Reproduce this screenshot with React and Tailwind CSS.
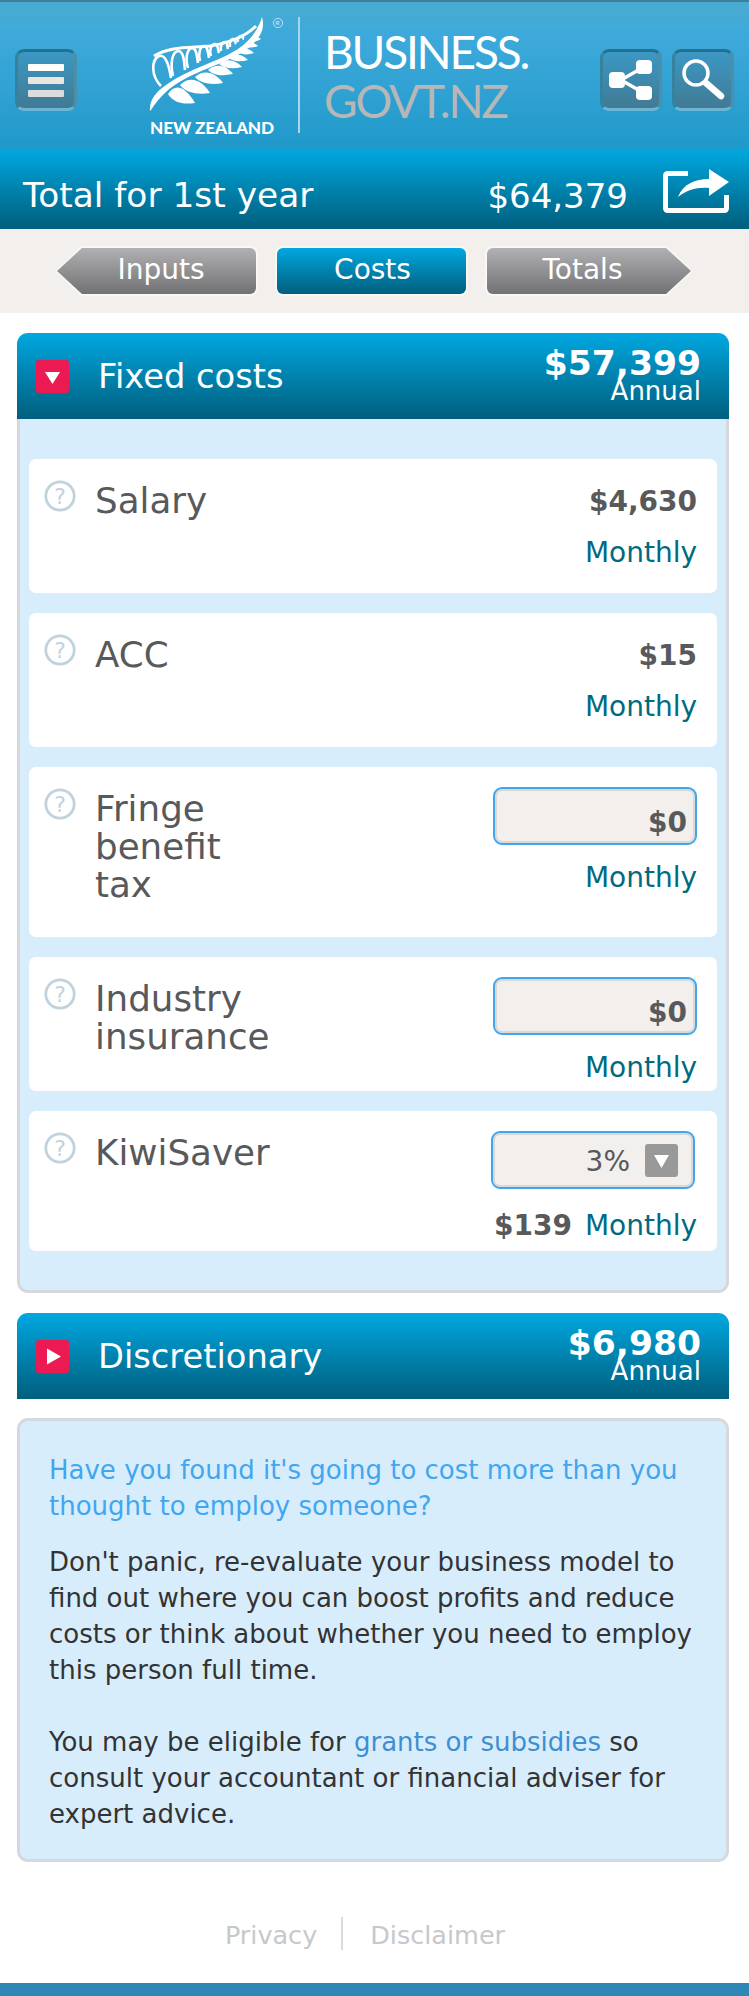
import React from 'react';

const gradBar = 'bg-gradient-to-b from-[#00a8e1] to-[#005f7e]';

function ToolButton({ children }) {
  return (
    <div className="w-[62px] h-[62px] rounded-[9px] border-[3px] border-t-[#25708f] border-l-[#35829f] border-r-[#4d8fa9] border-b-[#6db5d4] bg-gradient-to-b from-[#3a98c4] to-[#417a94] flex items-center justify-center">
      {children}
    </div>
  );
}

function Fern() {
  const arches = [
    'M21 76 C11 66 11 50 19 46 C26 44 29 56 31 68',
    'M33 66 C30 54 32 42 38 41 C44 41 44 52 45 60',
    'M48 58 C45 48 47 39 52 38 C57 38 57 48 58 53',
    'M60 51 C58 44 60 36 64 36 C68 36 68 44 69 48',
    'M71 46 C69 40 71 34 75 34 C78 34 78 40 79 43',
    'M81 41 C80 36 82 32 85 32 C88 32 87 37 88 39',
    'M90 37 C89 33 91 29 93 29 C96 29 95 33 96 34',
    'M98 32 C97 29 99 26 101 26 C103 25 103 29 104 29',
  ];
  const leaves = [
    'M28 84 C36 72 46 78 55 93 C42 95 33 92 28 84',
    'M40 75 C50 65 62 70 70 83 C58 85 46 83 40 75',
    'M55 67 C64 59 75 62 83 73 C72 75 61 74 55 67',
    'M68 60 C76 53 86 55 93 64 C83 66 74 66 68 60',
    'M79 54 C86 48 95 49 102 57 C93 59 85 59 79 54',
    'M89 48 C95 43 102 44 108 50 C101 52 94 52 89 48',
    'M98 42 C103 37 109 38 114 43 C108 45 102 45 98 42',
    'M104 36 C108 31 113 32 118 36 C113 38 108 38 104 36',
    'M109 30 C113 25 117 26 121 29 C117 32 112 32 109 30',
  ];
  return (
    <svg viewBox="0 0 170 130" className="w-[170px] h-[130px]">
      <path d="M10 101 C9 90 16 82 26 75 C50 58 78 52 98 39 C110 31 118 20 122 7 C124 14 123 20 120 25 C112 39 96 47 76 55 C52 65 28 73 11 100 Z" fill="#fff" />
      <path d="M14 46 C30 36 50 38 70 36 C88 33 104 28 116 16" fill="none" stroke="#fff" strokeWidth="3" />
      {arches.map((d) => (
        <path key={d} d={d} fill="none" stroke="#fff" strokeWidth="2.6" />
      ))}
      {leaves.map((d) => (
        <path key={d} d={d} fill="#fff" />
      ))}
      <circle cx="138" cy="13" r="4.6" fill="none" stroke="#fff" strokeOpacity="0.7" strokeWidth="0.9" />
      <text x="135.6" y="15.4" fontSize="6.5" fill="#fff" fillOpacity="0.8" fontFamily="Lato, sans-serif">R</text>
    </svg>
  );
}

function Header() {
  return (
    <header className="relative h-[149px] border-t-2 border-[#3e7f98] bg-gradient-to-b from-[#4aabd0] via-[#3eaadb] via-[20%] to-[#1e99ca]">
      <div className="flex h-full items-start pt-[47px] pl-[15px] pr-[15px]">
        <ToolButton>
          <div className="flex flex-col gap-[6px]">
            <div className="w-[36px] h-[7px] rounded-[1px] bg-white" />
            <div className="w-[36px] h-[7px] rounded-[1px] bg-[#e9e6e2]" />
            <div className="w-[36px] h-[7px] rounded-[1px] bg-[#dcdcdc]" />
          </div>
        </ToolButton>
        <div className="absolute left-[140px] top-[8px]">
          <Fern />
          <div className="absolute left-[10px] top-[108px] text-white text-[17.2px] leading-[20px] font-black tracking-[-0.1px] whitespace-nowrap font-['Lato',sans-serif]">
            NEW ZEALAND
          </div>
        </div>
        <div className="absolute left-[298px] top-[15px] w-[2px] h-[116px] bg-[#a8d7ec]" />
        <div className="absolute left-[324px] top-[25px] font-['Lato',sans-serif] text-[46px] leading-[49px] tracking-[-2.2px]">
          <div className="text-white">BUSINESS.</div>
          <div className="text-[#b7b7b7]">GOVT.NZ</div>
        </div>
        <div className="ml-auto flex gap-[10px]">
          <ToolButton>
            <svg viewBox="0 0 44 44" className="w-[44px] h-[44px]">
              <path d="M12 22 L33 10 M12 22 L33 34" stroke="#fff" strokeWidth="3.5" />
              <rect x="0" y="14" width="16" height="16" rx="4" fill="#fff" />
              <rect x="27" y="2" width="16" height="14" rx="4" fill="#fff" />
              <rect x="27" y="28" width="16" height="14" rx="4" fill="#fff" />
            </svg>
          </ToolButton>
          <ToolButton>
            <svg viewBox="0 0 44 44" className="w-[44px] h-[44px]">
              <circle cx="15" cy="15" r="12" fill="none" stroke="#fff" strokeWidth="3.5" />
              <path d="M25 25 L40 38" stroke="#fff" strokeWidth="6.5" strokeLinecap="round" />
            </svg>
          </ToolButton>
        </div>
      </div>
    </header>
  );
}

function TotalBar() {
  return (
    <div className={`${gradBar} h-[80px] flex items-center pl-[23px] pr-[20px] text-white`}>
      <span className="text-[34.4px] pt-[14px]">Total for 1st year</span>
      <span className="ml-auto text-[34px] pt-[14px]">$64,379</span>
      <svg viewBox="0 0 66 44" className="w-[66px] h-[44px] ml-[35px] mt-[4px]">
        <path d="M25 4.5 H5 Q2.5 4.5 2.5 7 V39 Q2.5 41.5 5 41.5 H61 Q63.5 41.5 63.5 39 V26" fill="none" stroke="#fff" strokeWidth="5" />
        <path d="M15 28 C20 15 32 10 46 10 V0 L66 13 L46 27 V19 C34 18 24 21 15 28 Z" fill="#fff" />
      </svg>
    </div>
  );
}

function Nav() {
  return (
    <nav className="h-[84px] bg-[#f2efec] flex pt-[17px] pl-[55px] gap-[17px] text-white text-[28px] leading-[38px]">
      <div className="w-[203px] h-[50px] bg-[#f8f7f6] [clip-path:polygon(26px_0,100%_0,100%_100%,26px_100%,0_50%)] p-[2px] rounded-r-[7px]">
        <div className="h-full pl-[9px] pb-[2px] flex items-center justify-center rounded-r-[6px] bg-gradient-to-b from-[#b1b1b3] to-[#727274] [clip-path:polygon(25px_0,100%_0,100%_100%,25px_100%,0_50%)]">
          Inputs
        </div>
      </div>
      <div className="w-[193px] h-[50px] rounded-[7px] bg-[#f8f7f6] p-[2px]">
        <div className="h-full pl-[2px] pb-[2px] flex items-center justify-center rounded-[6px] bg-gradient-to-b from-[#00a8e1] to-[#005f7e]">
          Costs
        </div>
      </div>
      <div className="w-[208px] h-[50px] bg-[#f8f7f6] [clip-path:polygon(0_0,calc(100%-26px)_0,100%_50%,calc(100%-26px)_100%,0_100%)] p-[2px] rounded-l-[7px]">
        <div className="h-full pr-[13px] pb-[2px] flex items-center justify-center rounded-l-[6px] bg-gradient-to-b from-[#b1b1b3] to-[#727274] [clip-path:polygon(0_0,calc(100%-25px)_0,100%_50%,calc(100%-25px)_100%,0_100%)]">
          Totals
        </div>
      </div>
    </nav>
  );
}

function SectionBar({ title, amount, icon }) {
  return (
    <div className={`${gradBar} relative h-[86px] rounded-t-[11px] flex items-center pl-[19px] text-white`}>
      <div className="w-[33px] h-[33px] rounded-[3px] bg-[#ec1a52] flex items-center justify-center">
        <svg viewBox="0 0 33 33" className="w-[33px] h-[33px]">
          {icon === 'down' ? (
            <path d="M9 12 H24 L16.5 24 Z" fill="#fff" />
          ) : (
            <path d="M11 8.5 L25 16.5 L11 24.5 Z" fill="#fff" />
          )}
        </svg>
      </div>
      <span className="ml-[29px] text-[33.7px] pt-[3px]">{title}</span>
      <div className="absolute right-[28px] top-[9px] text-right">
        <div className="text-[34.5px] leading-[42px] font-bold">{amount}</div>
        <div className="text-[26px] leading-[26px] -mt-[6px]">Annual</div>
      </div>
    </div>
  );
}

function HelpIcon() {
  return (
    <svg viewBox="0 0 32 32" className="w-[32px] h-[32px] shrink-0 mt-[1px]">
      <circle cx="16" cy="16" r="14.2" fill="none" stroke="#c0d3dd" strokeWidth="2.8" />
      <text x="16" y="24" textAnchor="middle" fontSize="22" fill="#c0d3dd" fontFamily="'DejaVu Sans', sans-serif">?</text>
    </svg>
  );
}

function Monthly({ className }) {
  return <span className={`text-[28px] leading-[34px] text-[#006a80] ${className || ''}`}>Monthly</span>;
}

function InputBox({ value }) {
  return (
    <div className="w-[204px] h-[58px] rounded-[9px] border-2 border-[#42a6ef] bg-[#f2efec] shadow-[inset_0_0_0_2px_#dad9d8] flex items-end justify-end pr-[8px] pb-[1px] text-[28px] leading-[38px] font-bold text-[#58595b]">
      {value}
    </div>
  );
}

function Row({ label, children, h }) {
  return (
    <div className={`${h} rounded-[7px] bg-white flex pl-[15px] pr-[20px] pt-[20px]`}>
      <HelpIcon />
      <div className="ml-[19px] pt-[3px] text-[35.7px] leading-[38px] text-[#58595b]">{label}</div>
      <div className="ml-auto flex flex-col items-end">{children}</div>
    </div>
  );
}

function StaticValue({ value }) {
  return (
    <>
      <div className="text-[28px] leading-[44px] pt-[1px] font-bold text-[#58595b]">{value}</div>
      <Monthly className="mt-[12px]" />
    </>
  );
}

function FixedCosts() {
  return (
    <section className="ml-[17px] mr-[20px] mt-[20px]">
      <SectionBar title="Fixed costs" amount="$57,399" icon="down" />
      <div className="border-[3px] border-t-0 border-[#d5d9dd] rounded-b-[11px] bg-[#d8edfc] px-[9px] pt-[40px] pb-[39px] flex flex-col gap-[20px]">
        <Row label="Salary" h="h-[134px]">
          <StaticValue value="$4,630" />
        </Row>
        <Row label="ACC" h="h-[134px]">
          <StaticValue value="$15" />
        </Row>
        <Row label={<>Fringe<br />benefit<br />tax</>} h="h-[170px]">
          <InputBox value="$0" />
          <Monthly className="mt-[16px]" />
        </Row>
        <Row label={<>Industry<br />insurance</>} h="h-[134px]">
          <InputBox value="$0" />
          <Monthly className="mt-[16px]" />
        </Row>
        <Row label="KiwiSaver" h="h-[140px]">
          <div className="w-[204px] h-[58px] mr-[2px] rounded-[9px] border-2 border-[#42a6ef] bg-[#f2efec] shadow-[inset_0_0_0_2px_#dad9d8] flex items-center justify-end pr-[15px] text-[28px] text-[#58595b]">
            <span className="mt-[3px]">3%</span>
            <div className="ml-[15px] w-[33px] h-[33px] rounded-[3px] bg-[#999] flex items-center justify-center">
              <svg viewBox="0 0 33 33" className="w-[33px] h-[33px]">
                <path d="M9 11 H24 L16.5 24 Z" fill="#fff" />
              </svg>
            </div>
          </div>
          <div className="mt-[20px] flex items-center">
            <span className="text-[28px] leading-[34px] font-bold text-[#58595b]">$139</span>
            <Monthly className="ml-[13px]" />
          </div>
        </Row>
      </div>
    </section>
  );
}

function Advice() {
  return (
    <section className="ml-[17px] mr-[20px] mt-[19px] h-[444px] rounded-[11px] border-[3px] border-[#d5d9dd] bg-[#d8edfc] px-[29px] pt-[31px] text-[26px] leading-[36px]">
      <p className="text-[#42a6ef]">Have you found it's going to cost more than you thought to employ someone?</p>
      <p className="mt-[20px] text-[#333]">
        Don't panic, re-evaluate your business model to find out where you can boost profits and reduce costs or think about whether you need to employ this person full time.
      </p>
      <p className="mt-[36px] text-[#333]">
        You may be eligible for <span className="text-[#3d8fd1]">grants or subsidies</span> so consult your accountant or financial adviser for expert advice.
      </p>
    </section>
  );
}

function Footer() {
  return (
    <footer className="mt-[55px] pr-[19px] flex justify-center items-center h-[33px] text-[25.5px] text-[#c5c9cc]">
      <span className="pt-[4px]">Privacy</span>
      <div className="ml-[24px] mr-[27px] w-[2px] h-[33px] bg-[#d9dbdd]" />
      <span className="pt-[4px]">Disclaimer</span>
    </footer>
  );
}

export default function App() {
  return (
    <div className="w-[749px] h-[1996px] bg-white overflow-hidden font-['DejaVu_Sans',sans-serif] flex flex-col">
      <Header />
      <TotalBar />
      <Nav />
      <FixedCosts />
      <section className="ml-[17px] mr-[20px] mt-[20px]">
        <SectionBar title="Discretionary" amount="$6,980" icon="right" />
      </section>
      <Advice />
      <Footer />
      <div className="mt-auto h-[13px] bg-[#2f87b5]" />
    </div>
  );
}
